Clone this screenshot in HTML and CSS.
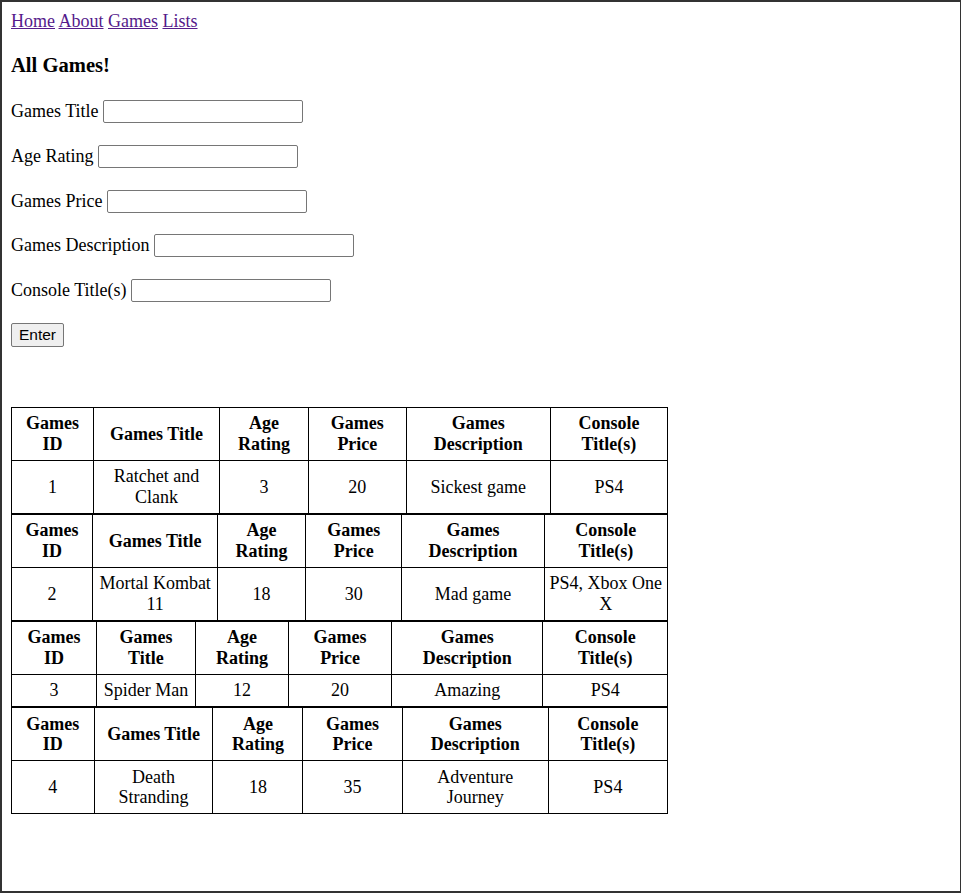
FILE: index.html
```html
<!DOCTYPE html>
<html>
<head>
<meta charset="utf-8">
<title>All Games</title>
<link rel="stylesheet" href="styles.css">
</head>
<body>
<nav class="nav"><a href="#">Home</a> <a href="#">About</a> <a href="#">Games</a> <a href="#">Lists</a></nav>
<h3 class="title">All Games!</h3>
<form class="form">
  <div class="row"><label>Games Title</label><input class="field" type="text"></div>
  <div class="row"><label>Age Rating</label><input class="field" type="text"></div>
  <div class="row"><label>Games Price</label><input class="field" type="text"></div>
  <div class="row"><label>Games Description</label><input class="field" type="text"></div>
  <div class="row"><label>Console Title(s)</label><input class="field" type="text"></div>
  <div class="row"><button class="btn" type="button">Enter</button></div>
</form>
<div class="tables">
  <table class="games">
    <tr><th>Games ID</th><th>Games Title</th><th>Age Rating</th><th>Games Price</th><th>Games Description</th><th>Console Title(s)</th></tr>
    <tr><td>1</td><td>Ratchet and Clank</td><td>3</td><td>20</td><td>Sickest game</td><td>PS4</td></tr>
  </table>
  <table class="games">
    <tr><th>Games ID</th><th>Games Title</th><th>Age Rating</th><th>Games Price</th><th>Games Description</th><th>Console Title(s)</th></tr>
    <tr><td>2</td><td>Mortal Kombat 11</td><td>18</td><td>30</td><td>Mad game</td><td>PS4, Xbox One X</td></tr>
  </table>
  <table class="games">
    <tr><th>Games ID</th><th>Games Title</th><th>Age Rating</th><th>Games Price</th><th>Games Description</th><th>Console Title(s)</th></tr>
    <tr><td>3</td><td>Spider Man</td><td>12</td><td>20</td><td>Amazing</td><td>PS4</td></tr>
  </table>
  <table class="games">
    <tr><th>Games ID</th><th>Games Title</th><th>Age Rating</th><th>Games Price</th><th>Games Description</th><th>Console Title(s)</th></tr>
    <tr><td>4</td><td>Death Stranding</td><td>18</td><td>35</td><td>Adventure Journey</td><td>PS4</td></tr>
  </table>
</div>
</body>
</html>
```
FILE: styles.css
```css
html {
  height: 100%;
  box-sizing: border-box;
  border-style: solid;
  border-color: #333;
  border-width: 2px 1px 2px 2px;
  background: #fff;
}
body {
  margin: 9px;
  font-family: "Liberation Serif", "Times New Roman", serif;
  font-size: 18px;
  color: #000;
}
.nav {
  line-height: 20px;
}
.nav a {
  color: #551a8b;
  text-decoration: underline;
}
.title {
  font-size: 20.6px;
  font-weight: bold;
  margin: 22px 0 0 0;
  line-height: 24px;
}
.form {
  display: flex;
  flex-direction: column;
  gap: 21.75px;
  margin-top: 23px;
}
.row {
  display: flex;
  align-items: center;
  gap: 4.5px;
  height: 23px;
}
.field {
  width: 200px;
  height: 23px;
  box-sizing: border-box;
  border: 1px solid #767676;
  border-radius: 2px;
  padding: 1px 2px;
  margin: 0;
  font-family: "Liberation Sans", Arial, sans-serif;
  font-size: 14.7px;
  background: #fff;
}
.btn {
  width: 53px;
  height: 24px;
  box-sizing: border-box;
  border: 1px solid #767676;
  border-radius: 2px;
  background: #efefef;
  font-family: "Liberation Sans", Arial, sans-serif;
  font-size: 15.5px;
  color: #000;
  padding: 0;
  margin: 0;
}
.tables {
  margin-top: 60px;
}
.games {
  width: 657px;
  border-collapse: collapse;
}
.games th,
.games td {
  border: 1px solid #000;
  padding: 5.5px 4.2px;
  text-align: center;
  line-height: 20.5px;
}
.games th {
  font-weight: bold;
}
```
